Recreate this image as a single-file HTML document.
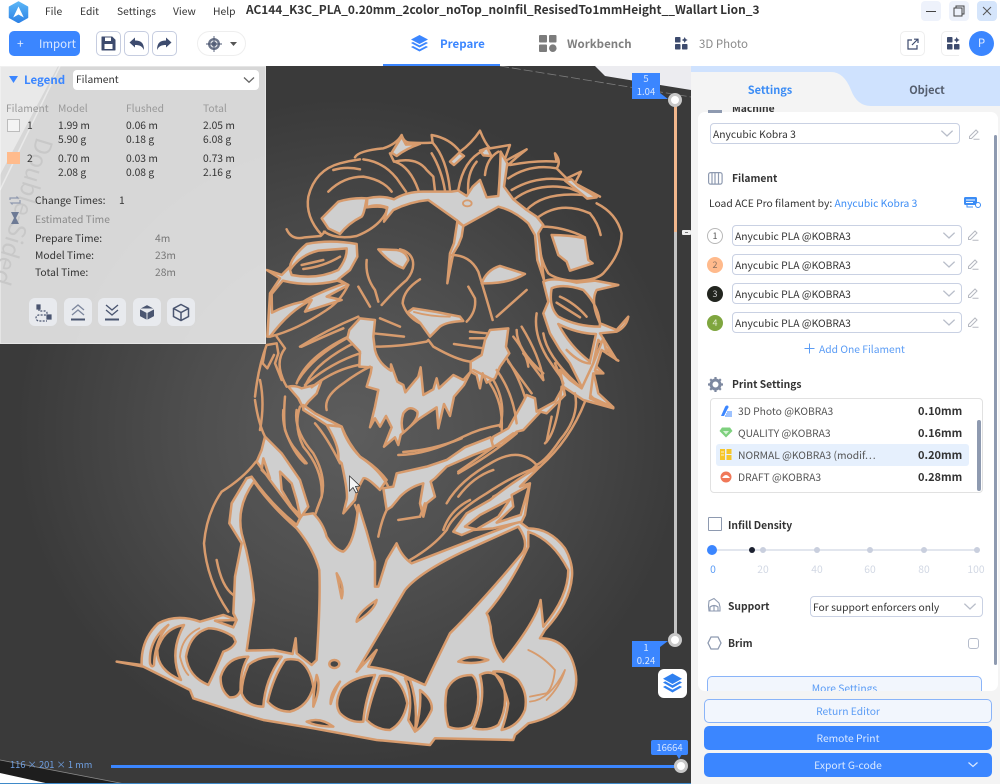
<!DOCTYPE html>
<html><head><meta charset="utf-8"><style>
*{box-sizing:border-box}
html,body{margin:0;padding:0;width:1000px;height:784px;overflow:hidden;background:#fff}
body{font-family:"Noto Sans CJK SC","Liberation Sans",sans-serif;position:relative}
#w{position:absolute;left:0;top:0;width:1000px;height:784px;overflow:hidden;filter:blur(.3px)}
.a{position:absolute}
.t{position:absolute;white-space:nowrap;line-height:14px;height:14px;font-size:10.3px;color:#333}
.b{font-weight:700}
.sel{position:absolute;border:1px solid #c9d1e3;border-radius:4px;background:#fff;height:21px}
.sel span{position:absolute;left:2px;top:3px;font-size:10.3px;line-height:14px;color:#333;white-space:nowrap}
.sel svg{position:absolute;right:5px;top:5px}
.lb{position:absolute;width:28px;height:28px;background:#e8eaee;border-radius:6px}
.tb{position:absolute;top:31px;width:25px;height:25px;border:1px solid #c6cde0;border-radius:5px;background:#fff}
.wb{position:absolute;top:1px;width:20px;height:20px;border-radius:4px;background:#eef2fb}
.l path,.l ellipse{fill:none;stroke:#d79b6d;stroke-width:7.5;stroke-linejoin:round;stroke-linecap:round}
.l .g{fill:#cfcfcf;fill-rule:evenodd}
.l .s{stroke-width:5.5}
.btn{position:absolute;left:704px;width:288px;height:24px;border-radius:5px;text-align:center;font-size:10.3px;line-height:24px}
</style></head><body><div id="w">
<svg width="0" height="0" style="position:absolute"><defs>
<symbol id="ch" viewBox="0 0 12 8"><path d="M1 1.5L6 6.2 11 1.5" fill="none" stroke="#b8bdc9" stroke-width="1.2"/></symbol>
<symbol id="pn" viewBox="0 0 12 12"><path d="M1.5 8.5L8 2l2 2-6.5 6.5h-2zM5.5 11.3h6" fill="none" stroke="#b5b8c0" stroke-width="1"/></symbol>
</defs></svg>

<!-- viewport -->
<div class="a" style="left:0;top:66px;width:691px;height:718px;background:radial-gradient(circle 335px at 350px 365px,#5d5d5d 0,#4f4f4f 45%,#3a3a3a 100%),#3a3a3a"></div>
<svg class="a" style="left:0;top:0" width="1000" height="784">
<path d="M595 66L605 76 691 90V66Z" fill="#ececf0"/>
<path d="M500 66L691 97" stroke="#7d7d7d" stroke-width=".8" stroke-dasharray="9 3" fill="none"/>
<path d="M0 66H58L0 175Z" fill="#fff"/>
<path d="M60 66L0 190" stroke="#fff" stroke-width="1.5" fill="none"/>
<path d="M0 760L125 784H0Z" fill="#1e1e1e"/>
<path d="M0 773L50 784H0Z" fill="#fff"/>
<path d="M0 760L125 784" stroke="#8a8a8a" stroke-width=".8"/>
</svg>

<!-- LION -->
<svg class="a" style="left:0;top:0" width="1000" height="784">
<!-- T frame -->
<g class="l" transform="translate(250 120) scale(.3333)">
<path d="M215 345Q165 290 175 230Q195 150 270 130Q300 122 330 118"/>
<path d="M250 150Q290 138 330 148"/>
<path d="M235 215Q280 170 340 170Q400 180 425 215"/>
<path d="M315 112Q325 92 400 85Q440 72 455 45Q462 68 480 68Q520 70 548 68L545 45Q600 55 630 95Q665 70 690 32Q705 70 720 85L780 75L762 125L830 88Q795 115 775 135"/>
<path class="g" d="M425 98L455 50L468 74L510 72Q470 85 440 108Z"/>
<path class="g" d="M600 125L628 98L642 108L612 135Z"/>
<path class="g" d="M690 92L712 84L724 108L700 106Z"/>
<path d="M340 118Q400 125 440 175L468 215"/>
<path d="M420 100L432 125Q500 110 530 150L550 170L555 212"/>
<path d="M435 125Q480 140 505 210"/>
<path d="M548 68Q590 115 600 210"/>
<path d="M545 100Q575 150 585 212"/>
<path d="M700 92Q640 120 625 210"/>
<path d="M680 125Q650 160 655 220"/>
<path d="M745 95Q710 115 705 165"/>
<path d="M780 135Q860 120 920 125L915 100Q935 125 920 145L950 175L993 155L975 190L1050 230"/>
<path d="M775 175Q840 130 920 145"/>
<path d="M785 210Q860 165 950 180"/>
<path d="M790 240Q860 185 960 205L1010 225"/>
<path d="M830 270Q880 215 1000 225"/>
<path d="M860 295Q930 240 1020 280Q1045 310 1052 345"/>
<path class="g" d="M945 182L965 178L985 198L1040 232L1012 236L975 205Z"/>
<path d="M1040 250Q1100 280 1115 340Q1115 400 1060 460Q1040 480 980 483Q920 480 895 460Q870 420 862 345"/>
<path class="g" d="M905 345Q960 345 1005 355L1015 420L1028 430L960 452L950 425L925 405Z"/>
<path d="M875 320Q940 320 1005 352"/>
<!-- ear L -->
<path class="g" d="M215 295L265 245Q310 232 350 235L345 262Q340 285 335 290Q295 310 270 342L235 325Z"/>
<path d="M222 335Q260 360 320 348Q390 320 412 270Q412 255 350 262"/>
<!-- ring -->
<path class="g" d="M352 235Q395 225 432 238Q470 215 520 215L605 215L625 212L650 228L668 200L690 180L710 232L745 228Q750 170 752 95L772 130L762 200L790 238L830 270L860 290L880 315L865 340L882 480L862 420L855 345L835 310Q790 270 745 260L640 318L622 302L535 240Q480 245 430 270L402 305L412 262Q380 250 350 262Z"/>
<ellipse cx="652" cy="250" rx="13" ry="9" class="s"/>
<path class="g" d="M622 305L640 318L635 350L625 375L610 400L592 490L600 400L612 370Z"/>
<!-- crest left -->
<path d="M110 328Q125 362 165 352L212 348L225 335"/>
<!-- left mane -->
<path class="g" d="M170 372Q240 358 320 372L322 410L300 450L265 478L295 495L230 530L275 540L165 575L185 540Q120 570 60 650L52 650L60 520L90 475L50 450L95 465L120 440Q125 410 170 372Z M120 450Q150 405 205 392L290 385Q292 415 265 450Q200 480 125 465Z M66 578L65 522L98 482Q180 502 262 482L285 490Q200 520 160 545Q110 555 66 578Z"/>
<path d="M155 435L220 420"/><path d="M160 447Q220 440 270 410"/>
<path d="M60 650Q140 630 230 570Q270 545 295 495"/>
<path d="M150 680Q230 630 325 590"/>
<path d="M140 790Q170 710 295 650"/>
<path d="M165 800Q190 730 320 665"/>
<path d="M15 830Q25 740 50 675L80 670L85 700L75 730L95 780"/>
<path d="M45 690L38 730L52 745L72 705"/>
<!-- face -->
<path class="g" d="M385 388L440 390Q470 395 475 420L460 445Q420 430 385 388Z"/>
<path d="M395 555Q440 505 470 480Q495 450 488 420Q480 395 450 388"/>
<path d="M350 420Q345 470 375 510L385 545"/>
<path d="M325 500L360 560"/>
<path d="M510 478Q460 510 458 550Q470 590 510 610"/>
<path d="M655 500L675 535Q680 575 650 605"/>
<path class="g" d="M472 578L490 565Q560 575 630 590L640 603Q590 605 570 620L540 650L510 608Q490 590 472 578Z"/>
<path class="s" d="M492 576Q540 590 600 590"/>
<path class="g" d="M695 490Q710 450 750 438L825 462Q780 490 705 490Z"/>
<path d="M605 405Q660 405 685 455Q705 520 728 600"/>
<path d="M740 590L830 510"/>
<path d="M380 680Q450 680 530 665L535 660L550 680Q620 720 660 725"/>
<path d="M390 595L450 620"/><path d="M370 640L462 650"/>
<path d="M660 635L710 640"/><path d="M660 655L715 655"/><path d="M612 672L700 685"/>
<!-- right cheek -->
<path class="g" d="M880 485Q905 470 980 488L1035 482L1105 495L1040 510Q1020 545 1050 610L1100 630L1135 590Q1130 620 1100 635L1050 640L1100 720L1045 660L1030 730L1060 760L1030 755L1045 820L1090 862L1030 835L995 800L960 730L930 690L900 640L880 580L895 545Z M905 505Q940 490 1000 510Q1050 560 1050 620Q980 620 925 590Q895 560 905 505Z M925 612Q980 640 1038 642L1020 725Q960 680 925 612Z"/>
<path d="M930 530Q975 550 1010 590"/><path d="M920 548L990 592"/>
<path d="M860 580Q850 640 890 710Q930 770 955 800"/>
<path d="M815 620Q870 710 880 780"/>
<path d="M790 650Q830 700 835 740"/>
<path d="M760 700Q810 770 830 850"/>
</g>
<!-- M frame -->
<g class="l" transform="translate(260 330) scale(.3333)">
<path class="g" d="M268 0L300 -35L345 -30L340 20L345 60Q355 100 393 122L393 103L412 155L430 165L436 187L475 140L482 112L490 195L520 178L530 145L537 175L580 135L610 150L632 125L612 165L582 200L570 258L552 222L535 295L530 232L475 268L422 315L415 345L405 322L372 350L395 292L378 258L360 290L345 265L330 292L345 230L355 180L320 170L332 130L335 112L298 110L300 65L262 25Z M430 250Q450 222 472 245Q478 268 430 308Q420 280 430 250Z"/>
<path class="g" d="M632 95L665 75L675 30L690 0L745 -5L738 50L748 70L720 110L705 145L680 158L668 130L660 175L650 135L632 125Z"/>
<path class="g" d="M700 320L745 295L790 215L800 195L825 205L830 245L885 215L910 170L915 195L860 250L842 245L790 300L770 305L725 345L690 350Z"/>
<path class="g" d="M910 170L970 210L1060 235L990 205L1000 130L1030 130L1005 122L1025 60L1075 92L1040 70L1030 25L1000 100L965 175L930 150L900 120Z"/>
<path class="g" d="M235 390Q240 350 200 285L245 290Q260 340 300 380Q350 410 380 450L360 480Q320 440 310 445Q290 480 285 510L250 550L260 510Q265 490 245 400Z"/>
<path class="g" d="M370 475L400 470L410 430L500 410L560 390L615 352L692 322L700 352L640 375L560 410L525 445L512 455L525 500L500 520L490 560L480 520L490 460Q450 470 420 500L395 530L380 540Z"/>
<path class="g" d="M85 170Q105 165 125 175L165 165L185 150L170 190L145 215L130 235L115 205Z"/>
<path class="g" d="M130 225L165 250L245 290L200 285L165 262L130 240Z"/>
<path d="M135 165Q210 100 300 70"/><path d="M155 172Q220 120 295 105"/>
<path d="M415 375Q500 375 610 320Q660 295 720 285"/>
<path d="M430 366Q520 360 605 325"/>
<path d="M595 430Q700 370 770 310"/>
<path d="M640 120L700 150Q740 220 720 290"/>
<path d="M690 160Q730 220 725 300"/>
<path d="M710 120Q760 190 770 280"/>
<path d="M745 95Q800 170 815 190"/>
<path d="M790 70L850 150"/>
<path d="M770 0Q770 60 850 130"/>
<path d="M855 340Q890 310 905 170"/>
<path d="M945 190Q960 260 900 330Q860 390 830 405L760 470L700 500"/>
<path d="M975 215Q930 330 840 410"/>
<path d="M850 10Q860 80 960 170"/>
<path d="M920 60Q960 100 990 100"/>
<path d="M885 100L910 160"/>
<path d="M80 170Q40 100 75 55L50 20"/>
<path d="M115 150Q160 80 260 25"/>
<path d="M125 50Q190 20 250 -5"/>
<path d="M200 240Q190 200 250 160Q290 130 330 110"/>
<path d="M75 200Q70 260 75 300Q100 370 135 400"/>
<path d="M0 150Q15 220 0 300"/>
<path d="M120 230Q100 290 130 350Q190 420 185 500L165 555"/>
<path d="M165 280Q200 320 240 400"/>
<path d="M245 290Q265 340 300 380Q360 420 385 470"/>
<path d="M285 525Q300 560 305 620"/>
<path d="M380 540Q365 570 355 620"/>
<path d="M20 340Q70 400 110 470"/>
<path d="M560 520Q600 450 700 395Q780 350 830 405"/>
<path d="M595 500Q640 440 700 420"/>
<path d="M550 600Q570 540 630 510"/>
</g>
<!-- L frame -->
<g class="l" transform="translate(100 400) scale(.3333)">
<path d="M468 185Q430 235 365 275Q320 340 312 430Q320 540 385 635"/>
<path d="M350 480Q365 560 400 585"/>
<path class="g" d="M50 785L125 795Q122 720 175 670Q230 640 300 665L370 645L410 660L400 640L405 530L425 430L388 370L395 310L440 235L455 230Q510 310 590 375L605 345L640 340Q670 370 680 410Q705 450 730 455Q765 430 775 315L800 395L825 485L825 560L835 560L860 480L890 430Q905 470 935 490L1090 430L1258 365L1285 385Q1350 385 1395 445Q1420 490 1416 530Q1410 610 1335 690L1320 715Q1395 715 1420 790Q1440 850 1415 895Q1375 950 1285 970L1245 1005L1240 1020L1005 1015L990 1035L830 1020L640 985L490 960L420 940L280 895L270 870L130 800Z
M462 245Q510 315 590 385Q640 445 658 510Q662 600 650 780L635 795L590 760L587 715L578 762L520 750L440 752L462 600Q455 500 425 400Q408 320 462 245Z
M710 520Q720 570 725 595Q735 560 710 520Z
M770 665Q770 640 830 600Q825 630 770 665Z
M688 792a15 12 0 1 0 30 0a15 12 0 1 0 -30 0Z
M252 675Q190 685 172 750Q170 810 243 840Q205 760 252 675Z
M150 790Q145 720 205 675Q165 720 162 795Q155 805 150 790Z
M400 710Q360 685 325 685Q270 700 258 770Q265 830 325 855Q345 815 370 755Q400 745 407 725Z
M345 662L410 660L400 682Z
M445 770Q380 770 362 830Q360 870 388 892Q415 895 422 870Q420 810 445 770Z
M545 770Q480 765 445 795Q425 840 425 880Q440 920 490 920Q495 840 545 770Z
M555 780Q520 830 503 905Q530 935 570 935Q625 920 640 860Q630 800 595 780Q570 775 555 780Z
M650 825Q665 860 640 920Q640 870 650 825Z
M720 845Q690 880 692 912Q700 880 720 845Z
M825 825Q760 830 725 865Q700 910 720 940Q750 970 790 965Q795 900 825 825Z
M840 828Q810 900 800 960Q830 990 870 990Q910 970 922 910Q910 850 875 830Q855 825 840 828Z
M915 835Q940 890 925 960L945 995Q955 910 930 840Z
M960 870Q1000 900 995 930Q975 975 945 995Q965 930 960 870Z
M1115 825Q1060 825 1040 870Q1030 930 1045 980Q1080 995 1115 975Q1145 910 1130 850Q1125 830 1115 825Z
M1140 825Q1160 900 1120 985Q1165 995 1195 975Q1230 910 1205 840Q1175 805 1140 825Z
M1180 815Q1215 860 1225 910Q1220 950 1205 990Q1255 980 1275 930Q1285 880 1255 840Q1220 810 1180 815Z
M1075 785Q1110 760 1165 780Q1125 795 1075 785Z
M620 965Q660 950 700 980Q650 980 620 965Z
M1285 395Q1360 420 1405 510Q1405 590 1330 680L1322 600Q1310 660 1210 785Q1175 740 1172 680L1165 650L1160 640Q1230 560 1285 440Z
M1265 462Q1150 600 1050 700Q1010 780 975 855L930 835Q880 810 805 800L830 750L770 815Q850 680 915 570Q960 515 1100 450L1255 380Q1290 430 1265 462Z"/>
<path class="s" d="M298 685Q245 710 240 770Q250 810 265 825"/>
<path class="s" d="M1285 750Q1330 770 1365 810Q1360 860 1340 880L1290 890"/>
<path class="s" d="M1290 905Q1350 900 1395 810Q1380 860 1340 900"/>
<path class="g" d="M495 110L545 160L600 240L625 320L600 355L570 320L510 240L485 205L470 185L485 150Z M490 175L510 235L485 210Z M540 215L575 250L590 300L600 345L575 320L545 270Z"/>
<path d="M465 0Q475 70 495 110"/>
<path d="M550 30Q545 90 580 140L620 190"/>
<path d="M590 30Q580 90 640 160Q680 230 665 290L650 330"/>
<path class="g" d="M1320 200L1260 260L1290 250L1275 345L1265 365L1180 385L1120 390L1085 405L1060 395L1100 340L1170 300Q1260 230 1320 200Z M1095 380L1140 345L1230 298L1195 350L1130 388Z M1235 285L1288 256L1262 345L1190 368L1240 320Z"/>
<path d="M1320 200Q1250 220 1160 280Q1060 340 1040 390Q1000 440 930 480"/>
<path d="M1075 215L1240 100"/>
<path d="M1340 125L1355 50"/>
<path d="M895 360L960 350"/>
<path d="M960 350L975 310"/>
</g>
<!-- cursor -->
<path d="M349.5 476V491L353 487.5L356 493L358 492L355.5 486.5L360 486Z" fill="#f4f4f4" stroke="#333" stroke-width=".8"/>
</svg>

<!-- legend panel -->
<div class="a" style="left:0;top:66px;width:266px;height:278px;background:rgba(231,231,231,.91);border:1px solid rgba(255,255,255,.35)"></div>
<div class="t" style="left:24px;top:212px;font-size:24px;color:#c8c8c8;transform:translate(-50%,-50%) rotate(107deg);height:28px;line-height:28px">Double-Sided</div>
<svg class="a" style="left:9px;top:76px" width="10" height="7"><path d="M0 0H9L4.5 7Z" fill="#3b86ff"/></svg>
<div class="t b" style="left:24px;top:73px;font-size:11.5px;color:#3b86ff">Legend</div>
<div class="a" style="left:73px;top:70px;width:186px;height:20px;background:#fff;border-radius:4px"></div>
<div class="t" style="left:76px;top:72px">Filament</div>
<svg class="a" style="left:243px;top:76px" width="12" height="8"><path d="M1 1.5L6 6.2 11 1.5" fill="none" stroke="#666" stroke-width="1.3"/></svg>
<div class="t" style="left:6px;top:101px;color:#999">Filament</div><div class="t" style="left:58px;top:101px;color:#999">Model</div><div class="t" style="left:126px;top:101px;color:#999">Flushed</div><div class="t" style="left:203px;top:101px;color:#999">Total</div>
<div class="a" style="left:7px;top:119px;width:13px;height:13px;background:#f4f4f4;border:1px solid #bcbcbc"></div>
<div class="t" style="left:27px;top:118px">1</div>
<div class="t" style="left:58px;top:118px">1.99 m</div><div class="t" style="left:126px;top:118px">0.06 m</div><div class="t" style="left:203px;top:118px">2.05 m</div>
<div class="t" style="left:58px;top:132px">5.90 g</div><div class="t" style="left:126px;top:132px">0.18 g</div><div class="t" style="left:203px;top:132px">6.08 g</div>
<div class="a" style="left:7px;top:152px;width:13px;height:12px;background:#ffbb8c"></div>
<div class="t" style="left:27px;top:151px">2</div>
<div class="t" style="left:58px;top:151px">0.70 m</div><div class="t" style="left:126px;top:151px">0.03 m</div><div class="t" style="left:203px;top:151px">0.73 m</div>
<div class="t" style="left:58px;top:165px">2.08 g</div><div class="t" style="left:126px;top:165px">0.08 g</div><div class="t" style="left:203px;top:165px">2.16 g</div>
<svg class="a" style="left:8px;top:194px" width="14" height="32" fill="none" stroke="#8e98ae" stroke-width="1.2"><path d="M2 6V4H10L8.5 2.5M12 6V9H3L4.5 10.5"/><path d="M3 18H11L8 24 11 30H3L6 24Z" fill="#6d7a95" stroke="none"/></svg>
<div class="t" style="left:35px;top:193px">Change Times:</div><div class="t" style="left:119px;top:193px">1</div>
<div class="t" style="left:35px;top:212px;color:#8a8a8a">Estimated Time</div>
<div class="t" style="left:35px;top:231px">Prepare Time:</div><div class="t" style="left:155px;top:231px;color:#777">4m</div>
<div class="t" style="left:35px;top:248px">Model Time:</div><div class="t" style="left:155px;top:248px;color:#777">23m</div>
<div class="t" style="left:35px;top:265px">Total Time:</div><div class="t" style="left:155px;top:265px;color:#777">28m</div>
<div class="lb" style="left:29px;top:298px"><svg width="28" height="28" fill="none" stroke="#4a5570" stroke-width="1.2"><path d="M8 7h3v4H8zM18 17h4v4h-4z" fill="#4a5570"/><path d="M10 11V13h6a2 2 0 0 1 0 4H10a3 3 0 0 0 0 6h8" stroke-dasharray="2 1.3"/></svg></div>
<div class="lb" style="left:64px;top:298px"><svg width="28" height="28" fill="none" stroke="#4a5570" stroke-width="1.3"><path d="M8 12l6-5 6 5M8 17l6-5 6 5" stroke="#7d879d"/><path d="M7 21.5H21" stroke-width="2"/></svg></div>
<div class="lb" style="left:98px;top:298px"><svg width="28" height="28" fill="none" stroke="#4a5570" stroke-width="1.3"><path d="M8 7l6 5 6-5M8 12l6 5 6-5"/><path d="M7 21.5H21" stroke-width="2"/></svg></div>
<div class="lb" style="left:133px;top:298px"><svg width="28" height="28"><path d="M14 6.5l7.5 4v8l-7.5 4-7.5-4v-8zM14 14.5v8M6.5 10.5l7.5 4 7.5-4" fill="#4a5570" stroke="#e8eaee" stroke-width="1"/></svg></div>
<div class="lb" style="left:167px;top:298px"><svg width="28" height="28" fill="none" stroke="#4a5570" stroke-width="1.5"><path d="M14 6.5l7.5 4v8l-7.5 4-7.5-4v-8zM14 14.5v8M6.5 10.5l7.5 4 7.5-4"/></svg></div>

<!-- sliders -->
<div class="a" style="left:674px;top:104px;width:3px;height:128px;background:#f2b78c"></div>
<div class="a" style="left:674px;top:232px;width:3px;height:406px;background:#c4c4c4"></div>
<div class="a" style="left:682px;top:230px;width:9px;height:5px;background:#f0f0f0;border-radius:1px"></div>
<div class="a" style="left:685px;top:232px;width:3px;height:1px;background:#777"></div>
<div class="a" style="left:668px;top:93px;width:14px;height:14px;border-radius:50%;background:#fff;border:3.5px solid #c8c8c8"></div>
<div class="a" style="left:668px;top:633px;width:14px;height:14px;border-radius:50%;background:#fff;border:3.5px solid #c8c8c8"></div>
<svg class="a" style="left:632px;top:73px" width="36" height="30"><path d="M0 0H28V20L36 26H0Z" fill="#3b86ff"/></svg>
<div class="t" style="left:632px;top:72px;width:28px;text-align:center;color:#d7e6ff;font-size:9.5px;line-height:13px;height:13px">5</div>
<div class="t" style="left:632px;top:85px;width:28px;text-align:center;color:#d7e6ff;font-size:9.5px;line-height:13px;height:13px">1.04</div>
<svg class="a" style="left:632px;top:640px" width="36" height="28"><path d="M0 1H36L28 7V27H0Z" fill="#3b86ff"/></svg>
<div class="t" style="left:632px;top:641px;width:28px;text-align:center;color:#d7e6ff;font-size:9.5px;line-height:13px;height:13px">1</div>
<div class="t" style="left:632px;top:654px;width:28px;text-align:center;color:#d7e6ff;font-size:9.5px;line-height:13px;height:13px">0.24</div>
<div class="a" style="left:658px;top:669px;width:29px;height:29px;background:#fff;border-radius:6px"></div>
<svg class="a" style="left:661px;top:672px" width="23" height="23" fill="#2f80f0"><path d="M11.5 1.5L21 6.8 11.5 12 2 6.8Z"/><path d="M2 10.5L4.2 9.2 11.5 13.3 18.8 9.2 21 10.5 11.5 16Z"/><path d="M2 15L4.2 13.7 11.5 17.8 18.8 13.7 21 15 11.5 20.5Z"/></svg>
<div class="a" style="left:111px;top:765px;width:565px;height:3px;background:#3b86ff"></div>
<div class="a" style="left:674px;top:759px;width:14px;height:14px;border-radius:50%;background:#fff;border:3.5px solid #c8c8c8"></div>
<div class="a" style="left:651px;top:740px;width:37px;height:15px;background:#3b86ff;border-radius:2px"></div>
<svg class="a" style="left:676px;top:754px" width="6" height="5"><path d="M0 0H6L3 5Z" fill="#3b86ff"/></svg>
<div class="t" style="left:651px;top:741px;width:37px;text-align:center;color:#d7e6ff;font-size:9.5px;height:13px;line-height:13px">16664</div>
<div class="t" style="left:10px;top:758px;color:#6f9fe0;font-size:9.3px;line-height:13px;height:13px">116 × 201 × 1 mm</div>
<div class="a" style="left:0;top:783px;width:691px;height:1px;background:#3f8ac9"></div>

<!-- header -->
<div class="a" style="left:0;top:0;width:1000px;height:66px;background:#fff"></div>
<svg class="a" style="left:8px;top:1px" width="21" height="22"><defs><linearGradient id="lg" x1="0" y1="0" x2="0" y2="1"><stop offset="0" stop-color="#5bb6f6"/><stop offset="1" stop-color="#2d82e6"/></linearGradient></defs><path d="M10.5 1L19.5 6V16.5L10.5 21.5 1.5 16.5V6Z" fill="url(#lg)" stroke="url(#lg)" stroke-width="1.5" stroke-linejoin="round"/><path d="M10.5 5.5L15.8 16.5 10.5 13.5 5.2 16.5Z" fill="#fff"/></svg>
<div class="t" style="left:45px;top:4px">File</div>
<div class="t" style="left:80px;top:4px">Edit</div>
<div class="t" style="left:117px;top:4px">Settings</div>
<div class="t" style="left:173px;top:4px">View</div>
<div class="t" style="left:213px;top:4px">Help</div>
<div class="t b" style="left:246px;top:2px;font-size:11.9px;line-height:16px;height:16px;color:#333">AC144_K3C_PLA_0.20mm_2color_noTop_noInfil_ResisedTo1mmHeight__Wallart Lion_3</div>
<div class="wb" style="left:921px"><svg width="20" height="20"><path d="M5 10.5H15" stroke="#444" stroke-width="1"/></svg></div>
<div class="wb" style="left:949px"><svg width="20" height="20" fill="none" stroke="#444" stroke-width="1"><path d="M7 7V5H15V13H13"/><rect x="5" y="7" width="8" height="8"/></svg></div>
<div class="wb" style="left:977px;background:#d5e5fb"><svg width="20" height="20"><path d="M6 6L14 14M14 6L6 14" stroke="#555" stroke-width="1"/></svg></div>
<div class="a" style="left:9px;top:31px;width:71px;height:25px;background:#3b86ff;border-radius:5px"></div>
<div class="t" style="left:17px;top:37px;color:#e4efff;font-size:12px">+</div>
<div class="t" style="left:39px;top:37px;color:#dbe9ff;font-size:11.5px">Import</div>
<div class="tb" style="left:96px"><svg width="23" height="23"><path d="M5 5H15L18 8V18H5Z" fill="#3d4b6e" stroke="#3d4b6e" stroke-linejoin="round"/><rect x="8" y="5.5" width="6" height="3.5" fill="#fff"/><rect x="7.5" y="12" width="8" height="5" fill="#fff"/></svg></div>
<div class="tb" style="left:124px"><svg width="23" height="23"><path d="M4.5 10.5L10 5.5V8.5C16 8.5 19 11 19 18C17 14 14.5 13 10 13V15.5Z" fill="#3d4b6e"/></svg></div>
<div class="tb" style="left:152px"><svg width="23" height="23"><path d="M18.5 10.5L13 5.5V8.5C7 8.5 4 11 4 18C6 14 8.5 13 13 13V15.5Z" fill="#3d4b6e"/></svg></div>
<div class="a" style="left:197px;top:31px;width:49px;height:25px;border:1px solid #eee;border-radius:13px"></div>
<svg class="a" style="left:206px;top:36px" width="16" height="16"><circle cx="8" cy="8" r="6" fill="#6b7489"/><circle cx="8" cy="8" r="3.2" fill="none" stroke="#fff" stroke-width=".9"/><path d="M8 0V16M0 8H16" stroke="#4a5570" stroke-width=".9"/></svg>
<svg class="a" style="left:230px;top:42px" width="7" height="4"><path d="M0 0H7L3.5 4Z" fill="#555"/></svg>
<svg class="a" style="left:410px;top:34px" width="19" height="19" fill="#3b86ff"><path d="M9.5 1L18 5.5 9.5 10 1 5.5Z"/><path d="M1 9L3 8 9.5 11.4 16 8 18 9 9.5 13.5Z"/><path d="M1 13L3 12 9.5 15.4 16 12 18 13 9.5 17.5Z"/></svg>
<div class="t b" style="left:440px;top:37px;color:#3b86ff;font-size:11.5px">Prepare</div>
<div class="a" style="left:383px;top:64px;width:117px;height:2px;background:#3b86ff"></div>
<svg class="a" style="left:539px;top:35px" width="18" height="17" fill="#7c7c7c"><rect x="0" y="0" width="8" height="7.5" rx="1"/><rect x="10" y="0" width="7.5" height="7.5" rx="1"/><rect x="0" y="9.5" width="8" height="7.5" rx="1"/><circle cx="13.8" cy="13.2" r="3.8"/></svg>
<div class="t b" style="left:567px;top:37px;color:#7f7f7f;font-size:11.5px">Workbench</div>
<svg class="a" style="left:675px;top:37px" width="13" height="13" fill="#3d4b6e"><rect width="5.5" height="5.5" y="0" x="0" rx=".8"/><rect x="0" y="7" width="5.5" height="5.5" rx=".8"/><rect x="7" y="7" width="5.5" height="5.5" rx=".8"/><path d="M9.7 0l1 2 2 1-2 1-1 2-1-2-2-1 2-1z"/></svg>
<div class="t" style="left:699px;top:37px;color:#8a8a8a;font-size:11.5px">3D Photo</div>
<div class="a" style="left:900px;top:31px;width:25px;height:25px;border:1px solid #eee;border-radius:5px"></div>
<svg class="a" style="left:907px;top:38px" width="12" height="12" fill="none" stroke="#3d4b6e" stroke-width="1.2"><path d="M5 2H1V11H10V7"/><path d="M5 7L10.5 1.5M7 1.2H11V5"/></svg>
<div class="a" style="left:941px;top:31px;width:18px;height:25px;border:1px solid #eee;border-right:0;border-radius:5px 0 0 5px"></div>
<svg class="a" style="left:947px;top:37px" width="13" height="13" fill="#3d4b6e"><rect width="5.5" height="5.5" y="0" x="0" rx=".8"/><rect x="0" y="7" width="5.5" height="5.5" rx=".8"/><rect x="7" y="7" width="5.5" height="5.5" rx=".8"/><path d="M9.7 0l1 2 2 1-2 1-1 2-1-2-2-1 2-1z"/></svg>
<div class="a" style="left:969px;top:31px;width:25px;height:25px;border-radius:50%;background:#3b86ff;color:#dfeaff;font-size:11.5px;text-align:center;line-height:25px">P</div>

<!-- right panel -->
<div class="a" style="left:691px;top:66px;width:309px;height:718px;background:#f4f4f4"></div>
<svg class="a" style="left:691px;top:66px" width="309" height="41"><path d="M0 0H309V40H180Q166 40 160 24Q153 6 140 6H0Z" fill="#cfe2fe"/></svg>
<div class="t b" style="left:691px;top:83px;width:158px;text-align:center;color:#3b8cf5;font-size:11px">Settings</div>
<div class="t b" style="left:860px;top:83px;width:134px;text-align:center;color:#555e6e;font-size:11px">Object</div>
<div class="a" style="left:698px;top:112px;width:300px;height:579px;background:#fff;border-radius:7px"></div>
<div class="a" style="left:698px;top:107px;width:300px;height:6px;overflow:hidden">
<div class="t b" style="left:34px;top:-6px">Machine</div>
<div class="a" style="left:10px;top:3px;width:14px;height:3px;background:#8e9ab0"></div></div>
<div class="a" style="left:994px;top:135px;width:3px;height:530px;background:#8e9ab0;border-radius:2px"></div>
<div class="sel" style="left:710px;top:123px;width:250px"><span>Anycubic Kobra 3</span><svg width="14" height="9"><use href="#ch"/></svg></div>
<svg class="a" style="left:968px;top:128px" width="12" height="12"><use href="#pn"/></svg>
<svg class="a" style="left:708px;top:172px" width="15" height="13" fill="none" stroke="#8e9ab0" stroke-width="1.2"><rect x=".6" y=".6" width="13.5" height="11.5" rx="2"/><path d="M4 1V12M7 1V12M10.5 1V12"/></svg>
<div class="t b" style="left:732px;top:171px">Filament</div>
<div class="t" style="left:709px;top:196px">Load ACE Pro filament by: <span style="color:#3b8cf5">Anycubic Kobra 3</span></div>
<svg class="a" style="left:964px;top:197px" width="18" height="12"><rect x="0" y="0" width="13" height="8" rx="1.5" fill="#3b8cf5"/><path d="M2 3H11M2 5.5H9" stroke="#fff"/><path d="M3 8V10H9" stroke="#3b8cf5" fill="none"/><circle cx="14" cy="8" r="2.5" fill="#fff" stroke="#3b8cf5"/></svg>

<div class="a" style="left:707px;top:228px;width:16px;height:16px;border-radius:50%;border:1px solid #b8b8b8;text-align:center;font-size:9px;line-height:14px;color:#555">1</div>
<div class="a" style="left:707px;top:257px;width:16px;height:16px;border-radius:50%;background:#ffba8c;text-align:center;font-size:9px;line-height:16px;color:#8a7060">2</div>
<div class="a" style="left:707px;top:286px;width:16px;height:16px;border-radius:50%;background:#22251f;text-align:center;font-size:9px;line-height:16px;color:#ccc">3</div>
<div class="a" style="left:707px;top:315px;width:16px;height:16px;border-radius:50%;background:#7fa63f;text-align:center;font-size:9px;line-height:16px;color:#e5edd5">4</div>
<div class="sel" style="left:732px;top:225px;width:230px"><span>Anycubic PLA @KOBRA3</span><svg width="14" height="9"><use href="#ch"/></svg></div>
<div class="sel" style="left:732px;top:254px;width:230px"><span>Anycubic PLA @KOBRA3</span><svg width="14" height="9"><use href="#ch"/></svg></div>
<div class="sel" style="left:732px;top:283px;width:230px"><span>Anycubic PLA @KOBRA3</span><svg width="14" height="9"><use href="#ch"/></svg></div>
<div class="sel" style="left:732px;top:312px;width:230px"><span>Anycubic PLA @KOBRA3</span><svg width="14" height="9"><use href="#ch"/></svg></div>
<svg class="a" style="left:967px;top:229px" width="12" height="12"><use href="#pn"/></svg>
<svg class="a" style="left:967px;top:258px" width="12" height="12"><use href="#pn"/></svg>
<svg class="a" style="left:967px;top:287px" width="12" height="12"><use href="#pn"/></svg>
<svg class="a" style="left:967px;top:316px" width="12" height="12"><use href="#pn"/></svg>
<svg class="a" style="left:804px;top:343px" width="11" height="11"><path d="M5.5 .5V10.5M.5 5.5H10.5" stroke="#5b9cf5" stroke-width="1"/></svg>
<div class="t" style="left:819px;top:342px;color:#5b9cf5">Add One Filament</div>

<svg class="a" style="left:708px;top:377px" width="15" height="15"><circle cx="7.5" cy="7.5" r="4.5" fill="none" stroke="#7d88a0" stroke-width="3"/><path d="M7.5 0V15M0 7.5H15M2.2 2.2L12.8 12.8M12.8 2.2L2.2 12.8" stroke="#7d88a0" stroke-width="2.2" stroke-dasharray="2.2 10.6"/></svg>
<div class="t b" style="left:732px;top:377px">Print Settings</div>
<div class="a" style="left:710px;top:398px;width:273px;height:95px;border:1px solid #e1e1e1;border-radius:4px"></div>
<div class="a" style="left:716px;top:444px;width:253px;height:22px;background:#e6f0fd;border-radius:3px"></div>
<div class="a" style="left:977px;top:420px;width:4px;height:71px;background:#8e9ab0;border-radius:2px"></div>
<svg class="a" style="left:720px;top:405px" width="13" height="12"><path d="M1 11L5 2a1.5 1.5 0 0 1 3 1L4 11Z" fill="#3b86ff"/><circle cx="7" cy="2" r="1.5" fill="#3b86ff"/><path d="M7 7H12M6 9H12M5 11H12" stroke="#3b86ff" stroke-width=".9"/></svg>
<svg class="a" style="left:719px;top:427px" width="14" height="11"><path d="M3 .5H11L13.5 4 7 10.5 .5 4Z" fill="#7ed07e"/><path d="M4 4H10L7 7.5Z" fill="#d5f3d5"/></svg>
<svg class="a" style="left:720px;top:449px" width="12" height="11" fill="#f6c628"><rect width="5" height="11"/><rect x="6.5" width="5" height="5"/><rect x="6.5" y="6" width="5" height="5"/><path d="M1 3H4M1 6H4" stroke="#fff" stroke-width=".8"/></svg>
<svg class="a" style="left:720px;top:471px" width="12" height="12"><circle cx="6" cy="6" r="5.5" fill="#f07858"/><path d="M2 7Q6 1 10 7Z" fill="#fff"/></svg>
<div class="t" style="left:738px;top:404px;color:#555">3D Photo @KOBRA3</div><div class="t b" style="left:918px;top:404px;font-size:11px">0.10mm</div>
<div class="t" style="left:738px;top:426px;color:#555">QUALITY @KOBRA3</div><div class="t b" style="left:918px;top:426px;font-size:11px">0.16mm</div>
<div class="t" style="left:738px;top:448px;color:#555">NORMAL @KOBRA3 (modif…</div><div class="t b" style="left:918px;top:448px;font-size:11px">0.20mm</div>
<div class="t" style="left:738px;top:470px;color:#555">DRAFT @KOBRA3</div><div class="t b" style="left:918px;top:470px;font-size:11px">0.28mm</div>

<div class="a" style="left:708px;top:517px;width:14px;height:14px;border:1.5px solid #8e9ab0;border-radius:1px"></div>
<div class="t b" style="left:728px;top:518px">Infill Density</div>
<div class="a" style="left:712px;top:549px;width:265px;height:2px;background:#e2e6ee"></div>
<div class="a" style="left:707px;top:545px;width:10px;height:10px;border-radius:50%;background:#3b86ff"></div>
<div class="a" style="left:749px;top:547px;width:6px;height:6px;border-radius:50%;background:#1c2130"></div>
<div class="a" style="left:760px;top:547px;width:6px;height:6px;border-radius:50%;background:#c9cfde"></div>
<div class="a" style="left:814px;top:547px;width:6px;height:6px;border-radius:50%;background:#c9cfde"></div>
<div class="a" style="left:867px;top:547px;width:6px;height:6px;border-radius:50%;background:#c9cfde"></div>
<div class="a" style="left:921px;top:547px;width:6px;height:6px;border-radius:50%;background:#c9cfde"></div>
<div class="a" style="left:974px;top:547px;width:6px;height:6px;border-radius:50%;background:#c9cfde"></div>
<div class="t" style="left:703px;top:562px;width:20px;text-align:center;color:#5b9cf5">0</div>
<div class="t" style="left:753px;top:562px;width:20px;text-align:center;color:#d2d8e4">20</div>
<div class="t" style="left:807px;top:562px;width:20px;text-align:center;color:#d2d8e4">40</div>
<div class="t" style="left:860px;top:562px;width:20px;text-align:center;color:#d2d8e4">60</div>
<div class="t" style="left:914px;top:562px;width:20px;text-align:center;color:#d2d8e4">80</div>
<div class="t" style="left:966px;top:562px;width:20px;text-align:center;color:#d2d8e4">100</div>

<svg class="a" style="left:707px;top:597px" width="15" height="15" fill="none" stroke="#8e9ab0" stroke-width="1.1"><path d="M2 14H13V10L12 6 7 1.5 2 4 1.5 9Z"/><path d="M3 14L3 10Q7 7 11 10V14M7 8V14"/></svg>
<div class="t b" style="left:728px;top:599px">Support</div>
<div class="sel" style="left:810px;top:596px;width:173px"><span>For support enforcers only</span><svg width="14" height="9"><use href="#ch"/></svg></div>
<svg class="a" style="left:707px;top:636px" width="15" height="14"><path d="M4 1H11L14 7 11 13H4L1 7Z" fill="none" stroke="#8e9ab0" stroke-width="1.3"/></svg>
<div class="t b" style="left:728px;top:636px">Brim</div>
<div class="a" style="left:968px;top:638px;width:11px;height:11px;border:1px solid #b5bccb;border-radius:3px"></div>
<div class="a" style="left:707px;top:676px;width:275px;height:15px;overflow:hidden">
<div class="a" style="left:0;top:0;width:275px;height:24px;border:1px solid #8ab4f8;border-radius:5px;background:#f2f6fd;text-align:center;font-size:10.3px;line-height:21px;color:#5b9cf5">More Settings</div></div>
<div class="btn" style="top:699px;border:1px solid #8ab4f8;background:#f2f6fd;color:#5b9cf5;line-height:21px">Return Editor</div>
<div class="btn" style="top:726px;background:#3b86ff;color:#dbe9ff">Remote Print</div>
<div class="btn" style="top:753px;background:#3b86ff;color:#dbe9ff">Export G-code</div>
<svg class="a" style="left:967px;top:761px" width="12" height="8"><path d="M1.5 1.5L6 5.5 10.500 1.5" fill="none" stroke="#dbe9ff" stroke-width="1.2"/></svg>
</div></body></html>
